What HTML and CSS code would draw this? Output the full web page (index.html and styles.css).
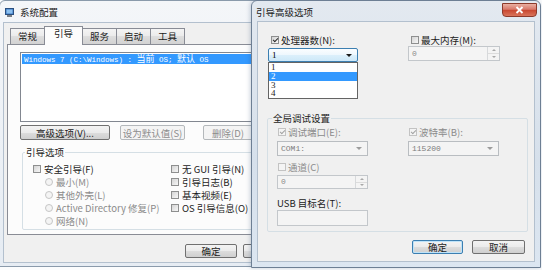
FILE: index.html
```html
<!DOCTYPE html>
<html lang="zh-CN">
<head>
  <meta charset="UTF-8" />
  <title>系统配置</title>
  <link rel="stylesheet" href="styles.css">
</head>
<body>
  <!-- 系统配置 window (behind) -->
  <div class="win win-main">
    <div class="titlebar">
      <svg class="app-icon" width="9" height="9" viewBox="0 0 9 9">
        <rect x="0.5" y="0.5" width="8" height="6" fill="#3b78c4" stroke="#2a4f80"/>
        <rect x="1.5" y="1.5" width="6" height="4" fill="#8cc0ef"/>
        <rect x="2" y="7" width="5" height="2" fill="#7a7f86"/>
      </svg>
      <span class="title">系统配置</span>
    </div>
    <div class="client">
      <div class="tabs">
        <span class="tab">常规</span>
        <span class="tab active">引导</span>
        <span class="tab">服务</span>
        <span class="tab">启动</span>
        <span class="tab">工具</span>
      </div>
      <div class="tab-panel">
        <div class="listbox">
          <div class="list-item selected">Windows 7 (C:\Windows) : <span class="cjk">当前</span> OS; <span class="cjk">默认</span> OS</div>
        </div>
        <div class="btn-row">
          <button class="btn btn-adv">高级选项(V)...</button>
          <button class="btn btn-setdef" disabled>设为默认值(S)</button>
          <button class="btn btn-del" disabled>删除(D)</button>
        </div>
        <fieldset class="group boot-group">
          <legend>引导选项</legend>
          <div class="boot-grid">
            <div class="col">
              <label class="opt"><span class="cb"></span>安全引导(F)</label>
              <label class="opt sub disabled"><span class="rb"></span>最小(M)</label>
              <label class="opt sub disabled"><span class="rb"></span>其他外壳(L)</label>
              <label class="opt sub disabled"><span class="rb"></span>Active Directory 修复(P)</label>
              <label class="opt sub disabled"><span class="rb"></span>网络(N)</label>
            </div>
            <div class="col">
              <label class="opt"><span class="cb"></span>无 GUI 引导(N)</label>
              <label class="opt"><span class="cb"></span>引导日志(B)</label>
              <label class="opt"><span class="cb"></span>基本视频(E)</label>
              <label class="opt"><span class="cb"></span>OS 引导信息(O)</label>
            </div>
          </div>
        </fieldset>
      </div>
      <div class="footer">
        <button class="btn btn-main">确定</button>
        <button class="btn btn-main">取消</button>
        <button class="btn btn-main">应用(A)</button>
      </div>
    </div>
  </div>

  <!-- 引导高级选项 dialog (front) -->
  <div class="win win-adv">
    <div class="titlebar">
      <span class="title">引导高级选项</span>
    </div>
    <span class="close-btn">
      <svg width="9" height="8" viewBox="0 0 9 8">
        <path d="M1.5 1 L7.5 7 M7.5 1 L1.5 7" stroke="#fff" stroke-width="1.8"/>
      </svg>
    </span>
    <div class="client">
      <div class="top-grid">
        <div class="field">
          <label class="opt"><span class="cb checked"></span>处理器数(N):</label>
          <div class="combo-wrap">
            <div class="combo focused"><span>1</span><span class="arrow"></span></div>
            <div class="dropdown">
              <div>1</div>
              <div class="selected">2</div>
              <div>3</div>
              <div>4</div>
            </div>
          </div>
        </div>
        <div class="field">
          <label class="opt"><span class="cb"></span>最大内存(M):</label>
          <div class="spin">
            <span class="val">0</span>
            <span class="spin-btns"><span class="up"></span><span class="down"></span></span>
          </div>
        </div>
      </div>

      <fieldset class="group debug-group">
        <legend>全局调试设置</legend>
        <div class="pair">
          <div class="field">
            <label class="opt disabled"><span class="cb checked"></span>调试端口(E):</label>
            <div class="combo"><span>COM1:</span><span class="arrow"></span></div>
          </div>
          <div class="field">
            <label class="opt disabled"><span class="cb checked"></span>波特率(B):</label>
            <div class="combo"><span>115200</span><span class="arrow"></span></div>
          </div>
        </div>
        <div class="field field-channel">
          <label class="opt disabled"><span class="cb"></span>通道(C)</label>
          <div class="spin spin-narrow">
            <span class="val">0</span>
            <span class="spin-btns"><span class="up"></span><span class="down"></span></span>
          </div>
        </div>
        <div class="field field-usb">
          <label class="opt">USB 目标名(T):</label>
          <div class="textbox"></div>
        </div>
      </fieldset>

      <div class="dlg-buttons">
        <button class="btn btn-dlg default">确定</button>
        <button class="btn btn-dlg">取消</button>
      </div>
    </div>
  </div>
</body>
</html>
```

FILE: styles.css
```css
* { box-sizing: border-box; }
body {
  margin: 0;
  width: 542px;
  height: 270px;
  position: relative;
  overflow: hidden;
  background: #fbfcfd;
  font-family: "Noto Sans CJK SC", sans-serif;
  font-size: 9.5px;
  line-height: 12px;
  color: #1b1b1b;
}

/* windows */
.win {
  position: absolute;
  top: 0;
  display: flex;
  flex-direction: column;
  border: 1px solid #8a9aab;
  border-radius: 6px 6px 0 0;
}
.win-main {
  left: -1px;
  width: 300px;
  height: 267px;
  padding: 0 3px 4px 4px;
  background: linear-gradient(#f4f6f9, #e6ecf3);
}
.win-adv {
  left: 251px;
  width: 290px;
  height: 268px;
  padding: 0 6px 6px 6px;
  background: linear-gradient(#e3e9f0, #d6e0eb 60%, #dce6f1);
  border-color: #6d7f94;
  box-shadow: -1px 0 4px rgba(40, 70, 110, 0.25);
}

.titlebar {
  display: flex;
  align-items: center;
  height: 22px;
  flex-shrink: 0;
}
.win-main .titlebar {
  padding-left: 1px;
  gap: 6px;
}
.win-adv .titlebar {
  height: 21px;
}
.win-adv .title {
  margin-left: -2px;
}

.close-btn {
  position: absolute;
  top: 2px;
  right: 3px;
  width: 35px;
  height: 14px;
  display: flex;
  align-items: center;
  justify-content: center;
  border: 1px solid #8c3a2b;
  border-radius: 0 0 4px 4px;
  background: linear-gradient(#eab0a2, #d8786a 45%, #c8462f 50%, #d9745a);
}

.client {
  flex: 1;
  display: flex;
  flex-direction: column;
  background: #f0f0f0;
  box-shadow: 0 0 0 1px #b3c0ce;
}
.win-main .client {
  padding: 3px 0 0 3px;
}
.win-adv .client {
  padding: 12px 9px 0 10px;
}

/* tabs */
.tabs {
  display: flex;
  height: 18px;
  padding-left: 3px;
  position: relative;
  z-index: 1;
}
.tab {
  margin-top: 2px;
  margin-right: -1px;
  height: 16px;
  padding: 0 7px;
  border: 1px solid #898c95;
  border-bottom: none;
  background: linear-gradient(#f4f4f4, #ebebeb 50%, #dedede 50%, #d2d2d2);
  line-height: 15px;
}
.tab.active {
  margin-top: 0;
  height: 19px;
  padding: 0 9px;
  background: #fcfcfc;
  line-height: 13px;
  position: relative;
  z-index: 2;
}

.tab-panel {
  border: 1px solid #898c95;
  background: #fcfcfc;
  padding: 7px 12px 4px 12px;
}

.listbox {
  height: 70px;
  border: 1px solid #828790;
  background: #fff;
  padding: 1px;
}
.list-item {
  height: 10px;
  line-height: 10px;
  padding-left: 2px;
  font-family: "Liberation Mono", "Noto Sans CJK SC", monospace;
  font-size: 7.5px;
  white-space: nowrap;
}
.list-item .cjk {
  font-family: "Noto Sans CJK SC", sans-serif;
  font-size: 9px;
}
.list-item.selected {
  background: #3399ff;
  color: #fff;
}

/* buttons */
.btn {
  font: inherit;
  color: inherit;
  height: 15px;
  padding: 0;
  flex-shrink: 0;
  border: 1px solid #707070;
  border-radius: 2px;
  background: linear-gradient(#f3f3f3, #ebebeb 50%, #dddddd 50%, #cfcfcf);
  line-height: 12px;
}
.btn:disabled {
  border-color: #b4b8bb;
  background: #f4f4f4;
  color: #8c8c8c;
}
.btn.default {
  border-color: #3c7fb1;
  box-shadow: inset 0 0 0 1px #bfe3f8;
}

.btn-row {
  display: flex;
  margin-top: 3px;
}
.btn-adv { width: 90px; }
.btn-setdef { width: 65px; margin-left: 10px; }
.btn-del { width: 50px; margin-left: 18px; }

/* group boxes */
.group {
  margin: 0;
  border: 1px solid #d5dfe5;
  border-radius: 2px;
}
.group legend {
  line-height: 12px;
  padding: 0 1px;
}
.boot-group {
  margin: 6px 0 0 2px;
  padding: 4px 10px 2px 10px;
}
.boot-group legend {
  margin-left: -8px;
}
.boot-grid {
  display: grid;
  grid-template-columns: 138px 1fr;
}

.opt {
  display: flex;
  align-items: center;
  height: 13px;
  white-space: nowrap;
}
.opt.sub {
  padding-left: 12px;
}
.disabled {
  color: #8b8b8b;
}

.cb {
  width: 8px;
  height: 8px;
  margin-right: 3px;
  flex-shrink: 0;
  position: relative;
  border: 1px solid #8e8f8f;
  background: linear-gradient(135deg, #d4d4d4, #f7f7f7);
}
.cb.checked::after {
  content: "";
  position: absolute;
  left: 2px;
  top: 0;
  width: 2px;
  height: 4px;
  border: solid #2b2b2b;
  border-width: 0 1.5px 1.5px 0;
  transform: rotate(45deg);
}
.disabled .cb {
  border-color: #c3c3c3;
  background: #f4f4f4;
}
.disabled .cb.checked::after {
  border-color: #a3a3a3;
}
.rb {
  width: 8px;
  height: 8px;
  margin-right: 3px;
  border-radius: 50%;
  border: 1px solid #c6c6c6;
  background: #f4f4f4;
}

.footer {
  display: flex;
  gap: 6px;
  padding: 9px 0 0 178px;
}
.btn-main {
  width: 52px;
  height: 14px;
}

/* advanced dialog */
.top-grid {
  display: grid;
  grid-template-columns: 140px 92px;
}
.top-grid .opt {
  height: 12px;
}
.top-grid .opt .cb {
  margin-left: 3px;
  margin-right: 2px;
}
.combo-wrap {
  position: relative;
  width: 90px;
  margin-top: 2px;
}

.combo {
  display: flex;
  align-items: center;
  justify-content: space-between;
  height: 15px;
  padding: 0 5px 0 3px;
  border: 1px solid #b9bdc1;
  background: #f4f4f4;
  color: #7d7d7d;
  font-family: "Liberation Mono", monospace;
  font-size: 8px;
}
.combo.focused {
  height: 14px;
  border-color: #3c7fb1;
  border-radius: 2px;
  background: linear-gradient(#fbfdff, #eef7fd 50%, #dcf0fb 50%, #cde8f8);
  color: #000;
  font-family: "Liberation Serif", serif;
  font-size: 9px;
}
.arrow {
  width: 0;
  height: 0;
  border-left: 3px solid transparent;
  border-right: 3px solid transparent;
  border-top: 3px solid #9c9c9c;
}
.combo.focused .arrow {
  border-top-color: #1a1a1a;
}

.dropdown {
  position: absolute;
  left: 0;
  top: 100%;
  width: 90px;
  height: 37px;
  border: 1px solid #646464;
  background: #fff;
  font-family: "Liberation Serif", serif;
  font-size: 9px;
  line-height: 9px;
  z-index: 3;
}
.dropdown div {
  height: 8.75px;
  padding-left: 2px;
}
.dropdown .selected {
  background: #3399ff;
  color: #fff;
}

.spin {
  display: flex;
  width: 92px;
  height: 15px;
  border: 1px solid #c3c7cb;
  background: #f4f4f4;
  color: #8b8b8b;
  font-family: "Liberation Mono", monospace;
  font-size: 8px;
  line-height: 13px;
}
.spin .val {
  flex: 1;
  padding-left: 3px;
}
.spin-btns {
  width: 12px;
  display: flex;
  flex-direction: column;
  border-left: 1px solid #d7d9db;
}
.spin-btns span {
  flex: 1;
  display: flex;
  align-items: center;
  justify-content: center;
}
.spin-btns .up {
  border-bottom: 1px solid #dcdcdc;
}
.spin-btns .up::after,
.spin-btns .down::after {
  content: "";
  border-left: 2px solid transparent;
  border-right: 2px solid transparent;
}
.spin-btns .up::after { border-bottom: 2px solid #a8a8a8; }
.spin-btns .down::after { border-top: 2px solid #a8a8a8; }

.debug-group {
  margin: 50px -3px 0 -1px;
  padding: 2px 0 5px 9px;
}
.debug-group legend {
  margin-left: -5px;
}
.debug-group .opt {
  height: 12px;
}
.debug-group .opt .cb {
  margin-left: 1px;
  margin-right: 2px;
}
.pair {
  display: grid;
  grid-template-columns: 131px 91px;
}
.pair .combo {
  margin-top: 3px;
  width: 91px;
}
.field-channel {
  margin-top: 5px;
}
.spin-narrow {
  width: 91px;
  height: 14px;
  margin-top: 2px;
  line-height: 12px;
}
.field-usb {
  margin-top: 8px;
}
.textbox {
  width: 91px;
  height: 16px;
  margin-top: 1px;
  border: 1px solid #c3c7cb;
  background: #f4f4f4;
}

.dlg-buttons {
  display: flex;
  justify-content: flex-end;
  gap: 9px;
  margin-top: 8px;
}
.btn-dlg {
  height: 14px;
  width: 51px;
}
.btn-dlg + .btn-dlg {
  width: 53px;
}
```
